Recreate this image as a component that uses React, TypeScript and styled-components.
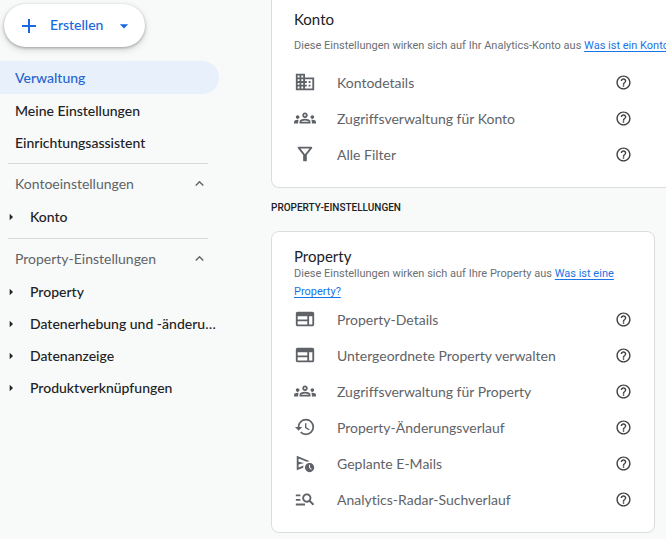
import React from "react";
import styled, { createGlobalStyle, css } from "styled-components";
import type { IconType } from "react-icons";
import {
  MdAdd,
  MdArrowDropDown,
  MdArrowRight,
  MdDomain,
  MdExpandLess,
  MdHelpOutline,
  MdHistory,
  MdOutlineFilterAlt,
  MdOutlineGroups,
  MdOutlineManageSearch,
  MdOutlineScheduleSend,
  MdOutlineWeb,
} from "react-icons/md";

const sans = '"Lato", "Open Sans", sans-serif';
const roboto = '"Roboto", "Liberation Sans", sans-serif';

const GlobalStyle = createGlobalStyle`
  *, *::before, *::after { box-sizing: border-box; }
  body {
    margin: 0;
    background: #f8faf9;
    color: #202124;
    font-family: ${sans};
    font-size: 14px;
    font-variant-ligatures: none;
  }
  h2, h3, p, ul { margin: 0; padding: 0; }
  ul { list-style: none; }
  button { border: 0; background: none; padding: 0; font: inherit; color: inherit; cursor: pointer; }
`;

const Page = styled.div`
  display: flex;
  align-items: flex-start;
  overflow: hidden;
`;

const Sidebar = styled.nav`
  flex: 0 0 219px;
  min-width: 0;
  padding-top: 4px;
`;

const CreateButton = styled.button`
  && {
    display: flex;
    align-items: center;
    height: 43px;
    margin: 0 0 14px 4px;
    padding: 0 11px 0 13px;
    border-radius: 22px;
    background: #fff;
    color: #1a67e0;
    font-weight: 500;
    box-shadow: 0 1px 3px rgba(60, 64, 67, 0.4), 0 3px 7px rgba(60, 64, 67, 0.18);
  }
  span { margin: 0 11px 0 9px; line-height: 20px; padding-bottom: 2px; }
`;

const NavLink = styled.a<{ $active?: boolean }>`
  display: flex;
  align-items: center;
  height: 32px;
  padding-left: 15px;
  border-radius: 0 17px 17px 0;
  font-weight: 500;
  color: #202124;
  text-decoration: none;
  ${({ $active }) => $active && css`height: 33px; background: #e8f0fc; color: #2565cf;`}
`;

const NavGroup = styled.section`
  margin: 5px 11px 0 8px;
  padding-top: 4px;
  border-top: 1px solid #d6d9dc;
`;

const GroupHeader = styled.button`
  && {
    display: flex;
    align-items: center;
    justify-content: space-between;
    width: 100%;
    height: 30px;
    margin-bottom: 3px;
    padding-left: 7px;
    color: #5f6368;
  }
`;

const TreeItem = styled.button`
  && {
    display: flex;
    align-items: center;
    width: calc(100% + 8px);
    height: 32px;
    font-weight: 500;
    text-align: left;
  }
  svg { flex: none; margin: 0 11px 0 -5px; }
  span { overflow: hidden; text-overflow: ellipsis; white-space: nowrap; line-height: 20px; }
`;

const Main = styled.main`
  flex: 1;
  min-width: 0;
  padding: 0 11px 6px 52px;
`;

const SectionLabel = styled.h2`
  margin: 12px 0 15px;
  font: 500 10px/16px ${roboto};
  text-transform: uppercase;
`;

const Card = styled.section<{ $bleed?: boolean }>`
  padding: 16px 22px 15px 22px;
  border: 1px solid #dadce0;
  border-radius: 8px;
  background: #fff;
  ${({ $bleed }) => $bleed && css`
    margin-right: -32px;
    padding: 11px 54px 15px 22px;
    border-top: 0;
    border-radius: 0 0 8px 8px;
  `}
`;

const CardTitle = styled.h3`
  font-size: 15px;
  font-weight: 400;
  line-height: 16px;
`;

const Description = styled.p<{ $single?: boolean }>`
  margin-top: 1px;
  font: 400 11px/18px ${roboto};
  color: #6b6f74;
  ${({ $single }) => $single && css`margin: 10px 0 9px; white-space: nowrap;`}
  a { color: #1a73e8; text-underline-offset: 2px; }
`;

const SettingRow = styled.li`
  display: flex;
  align-items: center;
  justify-content: space-between;
  height: 36px;
`;

const SettingLink = styled.a`
  display: flex;
  align-items: center;
  gap: 21px;
  color: #5f6368;
  text-decoration: none;
  white-space: nowrap;
`;

const HelpButton = styled.button`
  && { display: flex; color: #3c4043; }
`;

type Setting = { label: string; icon: IconType };

const accountSettings: Setting[] = [
  { label: "Kontodetails", icon: MdDomain },
  { label: "Zugriffsverwaltung für Konto", icon: MdOutlineGroups },
  { label: "Alle Filter", icon: MdOutlineFilterAlt },
];

const propertySettings: Setting[] = [
  { label: "Property-Details", icon: MdOutlineWeb },
  { label: "Untergeordnete Property verwalten", icon: MdOutlineWeb },
  { label: "Zugriffsverwaltung für Property", icon: MdOutlineGroups },
  { label: "Property-Änderungsverlauf", icon: MdHistory },
  { label: "Geplante E-Mails", icon: MdOutlineScheduleSend },
  { label: "Analytics-Radar-Suchverlauf", icon: MdOutlineManageSearch },
];

function SettingList({ items }: { items: Setting[] }) {
  return (
    <ul>
      {items.map(({ label, icon: Icon }) => (
        <SettingRow key={label}>
          <SettingLink href="#">
            <Icon size={22} />
            {label}
          </SettingLink>
          <HelpButton type="button" aria-label={`Hilfe: ${label}`}>
            <MdHelpOutline size={17} />
          </HelpButton>
        </SettingRow>
      ))}
    </ul>
  );
}

function TreeGroup({ title, items }: { title: string; items: string[] }) {
  return (
    <NavGroup>
      <GroupHeader type="button" aria-expanded="true">
        {title}
        <MdExpandLess size={17} />
      </GroupHeader>
      {items.map((item) => (
        <TreeItem key={item} type="button" aria-expanded="false">
          <MdArrowRight size={16} />
          <span>{item}</span>
        </TreeItem>
      ))}
    </NavGroup>
  );
}

export default function App() {
  return (
    <>
      <GlobalStyle />
      <Page>
        <Sidebar>
          <CreateButton type="button">
            <MdAdd size={24} />
            <span>Erstellen</span>
            <MdArrowDropDown size={20} />
          </CreateButton>
          <NavLink href="#" $active aria-current="page">Verwaltung</NavLink>
          <NavLink href="#">Meine Einstellungen</NavLink>
          <NavLink href="#">Einrichtungsassistent</NavLink>
          <TreeGroup title="Kontoeinstellungen" items={["Konto"]} />
          <TreeGroup
            title="Property-Einstellungen"
            items={["Property", "Datenerhebung und -änderungen", "Datenanzeige", "Produktverknüpfungen"]}
          />
        </Sidebar>
        <Main>
          <Card $bleed>
            <CardTitle>Konto</CardTitle>
            <Description $single>
              Diese Einstellungen wirken sich auf Ihr Analytics-Konto aus <a href="#">Was ist ein Konto?</a>
            </Description>
            <SettingList items={accountSettings} />
          </Card>
          <SectionLabel>Property-Einstellungen</SectionLabel>
          <Card>
            <CardTitle>Property</CardTitle>
            <Description>
              Diese Einstellungen wirken sich auf Ihre Property aus <a href="#">Was ist eine Property?</a>
            </Description>
            <SettingList items={propertySettings} />
          </Card>
        </Main>
      </Page>
    </>
  );
}
